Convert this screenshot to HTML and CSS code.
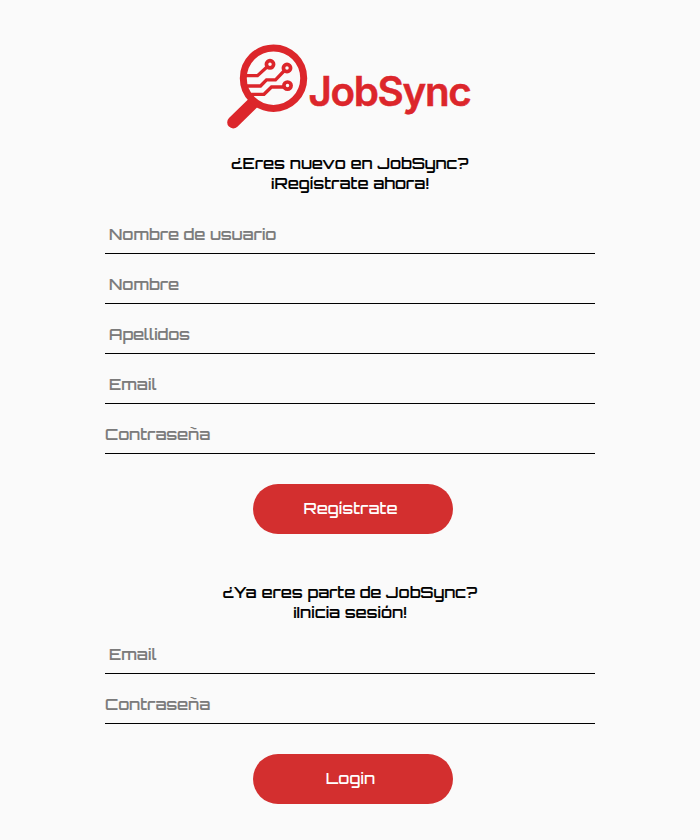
FILE: index.html
```html
<!DOCTYPE html>
<html lang="es">
<head>
<meta charset="utf-8">
<title>JobSync</title>
<link rel="stylesheet" href="styles.css">
</head>
<body>
<main class="page">
  <svg class="logo" viewBox="220 35 260 100" role="img" aria-label="JobSync">
    <path class="handle" d="M254.5 101.5 233.2 122.4"/>
    <circle class="lens" cx="273.5" cy="78.2" r="30.2"/>
    <g class="circuit">
      <path d="M245 75.7H257.5L267.5 66.5"/>
      <path d="M245 86H260.5L266.5 79.8H275.5L284.5 70.5"/>
      <path d="M249 94.3H264L271.5 87H284"/>
      <circle cx="270" cy="64.3" r="3.6"/>
      <circle cx="287" cy="68" r="3.6"/>
      <circle cx="287.5" cy="85.6" r="3.6"/>
    </g>
    <text class="wordmark" x="308.5" y="105.9" textLength="163.2">JobSync</text>
  </svg>

  <form class="form signup">
    <h2 class="title">¿Eres nuevo en JobSync?<br>¡Regístrate ahora!</h2>
    <input class="field" type="text" placeholder="Nombre de usuario">
    <input class="field" type="text" placeholder="Nombre">
    <input class="field" type="text" placeholder="Apellidos">
    <input class="field" type="text" placeholder="Email">
    <input class="field password" type="password" placeholder="Contraseña">
    <button class="button" type="button">Regístrate</button>
  </form>

  <form class="form login">
    <h2 class="title">¿Ya eres parte de JobSync?<br>¡Inicia sesión!</h2>
    <input class="field" type="text" placeholder="Email">
    <input class="field password" type="password" placeholder="Contraseña">
    <button class="button" type="button">Login</button>
  </form>
</main>
</body>
</html>
```
FILE: styles.css
```css
* { box-sizing: border-box; }
body { margin: 0; background: #fafafa; color: #000; font: 500 16px/20px Orbitron, "DejaVu Sans", sans-serif; }
.page { display: flex; flex-direction: column; align-items: center; height: 840px; padding-top: 35px; }
.logo { display: block; width: 260px; height: 100px; flex: none; }
.handle { fill: none; stroke: #dc262b; stroke-width: 12; stroke-linecap: round; }
.lens { fill: #fafafa; stroke: #dc262b; stroke-width: 7; }
.circuit { fill: none; stroke: #dc262b; stroke-width: 3.3; }
.circuit circle { fill: #fafafa; stroke-width: 3.7; }
.wordmark { font: 600 40.3px Inter, sans-serif; font-optical-sizing: none; fill: #dc262b; stroke: #dc262b; stroke-width: .5; }
.form { display: flex; flex-direction: column; width: 490px; }
.signup { margin-top: 18px; }
.login { margin-top: 48px; }
.title { margin: 0 0 21px; font-size: 16px; font-weight: 500; line-height: 20px; letter-spacing: .03px; text-align: center; -webkit-text-stroke: .15px #000; }
.login .title { margin-bottom: 12px; }
.field { width: 100%; height: 40px; margin: 0 0 10px; padding: 0 4px; border: 0; border-bottom: 1px solid #000; border-radius: 0; background: transparent; font: inherit; letter-spacing: .03px; outline: none; }
.field::placeholder { color: #7b7b7b; opacity: 1; -webkit-text-stroke: .15px #7b7b7b; }
.password { padding: 0; margin-bottom: 30px; }
.button { width: 200px; height: 50px; margin-left: 148px; padding: 0 5px 2px 0; border: 0; border-radius: 25px; background: #d32f2f; color: #fff; font: inherit; letter-spacing: .03px; }
```
